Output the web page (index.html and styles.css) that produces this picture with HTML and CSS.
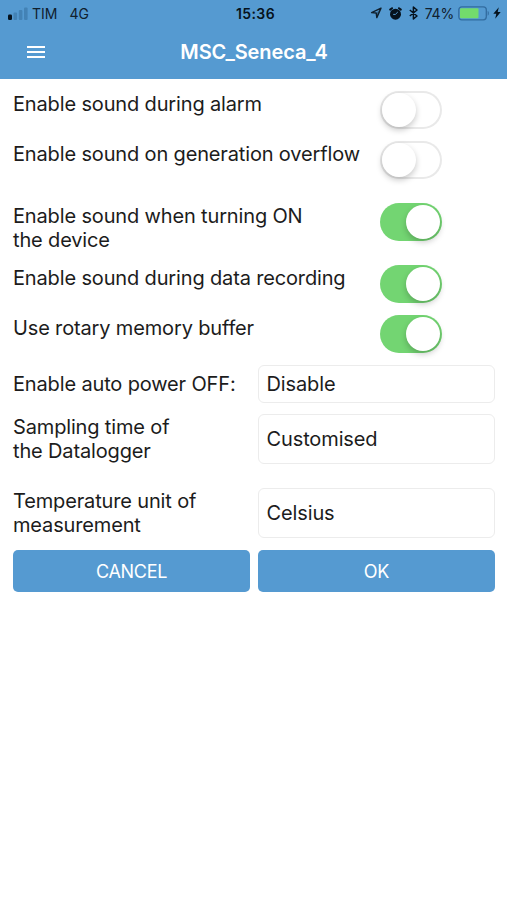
FILE: index.html
```html
<!DOCTYPE html>
<html lang="en">
<head>
<meta charset="utf-8">
<title>MSC_Seneca_4</title>
<link rel="stylesheet" href="styles.css">
</head>
<body>
<header class="top">
  <div class="status">
    <div class="status-left">
      <svg class="signal" width="20" height="13" viewBox="0 0 20 13"><rect x="0" y="7.5" width="4" height="5.5" rx="1.3" fill="#06121d"/><g fill="#4382b5"><rect x="5.5" y="5.5" width="3.6" height="7.5" rx="1"/><rect x="10.8" y="3" width="3.6" height="10" rx="1"/><rect x="16" y=".5" width="3.6" height="12.5" rx="1"/></g></svg>
      <span class="carrier">TIM</span>
      <span class="network">4G</span>
    </div>
    <span class="clock">15:36</span>
    <div class="status-right">
      <svg class="location" width="12" height="12" viewBox="0 0 12 12"><path d="M11 1.2 1.6 5.6 6.2 6 6.8 10.6Z" fill="none" stroke="#10202e" stroke-width="1.4" stroke-linejoin="round"/><path d="M11 1.2 6.2 6 6.8 10.6Z" fill="#10202e" fill-opacity=".4"/></svg>
      <svg class="alarm" width="13" height="13" viewBox="0 0 13 13"><circle cx="6.5" cy="7.2" r="5.5" fill="#06121d"/><path d="M1.2 2.6 3 1.2M11.8 2.6 10 1.2" stroke="#06121d" stroke-width="2" stroke-linecap="round"/><path d="M8.8 5 6.4 7.4H4.2" fill="none" stroke="#559ad1" stroke-width="1"/></svg>
      <svg class="bluetooth" width="9" height="14" viewBox="0 0 9 14"><path d="M.8 4 8 10 4.4 13V1L8 4 .8 10" fill="none" stroke="#06121d" stroke-width="1.5" stroke-linejoin="round"/></svg>
      <span class="percent">74%</span>
      <svg class="battery" width="32" height="15" viewBox="0 0 32 15"><rect x=".8" y=".8" width="27.5" height="13" rx="3" fill="none" stroke="#326c9f" stroke-width="1.3"/><rect x="2" y="2.3" width="18.5" height="10" rx="1" fill="#73db6c"/><path d="M29.7 5c1.5.5 1.5 4.2 0 4.7Z" fill="#326c9f"/></svg>
      <svg class="bolt" width="8" height="12" viewBox="0 0 8 12"><path d="M5.8.3.3 6.7h3L2.2 11.7 7.7 4.9h-3Z" fill="#06121d"/></svg>
    </div>
  </div>
  <div class="nav">
    <svg class="menu" width="18" height="14" viewBox="0 0 18 14"><path d="M0 2h18M0 7h18M0 12h18" stroke="#fff" stroke-width="2"/></svg>
    <h1 class="title">MSC_Seneca_4</h1>
  </div>
</header>
<main class="content">
  <section class="toggles">
    <div class="toggle-row"><span class="label">Enable sound during alarm</span><span class="switch"></span></div>
    <div class="toggle-row tall"><span class="label">Enable sound on generation overflow</span><span class="switch"></span></div>
    <div class="toggle-row tall"><span class="label">Enable sound when turning ON<br>the device</span><span class="switch on"></span></div>
    <div class="toggle-row"><span class="label">Enable sound during data recording</span><span class="switch on"></span></div>
    <div class="toggle-row"><span class="label">Use rotary memory buffer</span><span class="switch on"></span></div>
  </section>
  <section class="fields">
    <div class="field power"><span class="label">Enable auto power OFF:</span><div class="select">Disable</div></div>
    <div class="field sampling"><span class="label">Sampling time of<br>the Datalogger</span><div class="select">Customised</div></div>
    <div class="field unit"><span class="label">Temperature unit of<br>measurement</span><div class="select">Celsius</div></div>
  </section>
  <div class="actions">
    <button class="button" type="button">CANCEL</button>
    <button class="button" type="button">OK</button>
  </div>
</main>
</body>
</html>
```
FILE: styles.css
```css
* { box-sizing: border-box; }
body {
  margin: 0;
  min-height: 900px;
  background: #fff;
  color: #1c1c1c;
  font-family: Inter, "Liberation Sans", sans-serif;
  font-size: 20px;
  line-height: 24.5px;
}
svg { display: block; flex: none; }
.top { height: 79px; background: #559ad1; }
.status {
  display: grid;
  grid-template-columns: 1fr auto 1fr;
  height: 27px;
  padding: 0 6px 0 8px;
  align-items: center;
  color: #10202e;
  font-size: 14px;
  line-height: 27px;
}
.status-left, .status-right { display: flex; align-items: center; }
.status-right { justify-content: flex-end; }
.carrier { margin-left: 4px; }
.network { margin-left: 12px; }
.clock { padding-left: 2px; color: #06121d; font-weight: 600; letter-spacing: .4px; }
.signal, .location, .alarm, .bluetooth, .battery, .bolt { margin-top: -1px; }
.alarm { margin-left: 7px; }
.bluetooth { margin-left: 7px; }
.percent { margin-left: 7px; letter-spacing: -.2px; }
.battery { margin-left: 4px; }
.bolt { margin-left: 3px; }
.nav {
  display: grid;
  grid-template-columns: 45px 1fr 45px;
  height: 50px;
  padding: 0 27px;
  align-items: center;
}
.title { margin: 0; padding-left: 1px; color: #fff; font-size: 20px; font-weight: 600; letter-spacing: -.1px; text-align: center; }
.content { padding: 12.5px 12px 0 13px; }
.toggles { display: grid; row-gap: 13px; }
.toggle-row { display: grid; grid-template-columns: 367px 62px; height: 37px; align-items: start; }
.toggle-row.tall { height: 49px; }
.label { white-space: nowrap; letter-spacing: -.15px; }
.switch {
  display: flex;
  width: 62px;
  height: 38px;
  margin-top: -.5px;
  padding: 2px;
  border-radius: 19px;
  box-shadow: inset 0 0 0 2px #e9e9e9;
}
.switch::before {
  content: "";
  width: 34px;
  height: 34px;
  border-radius: 50%;
  background: #fff;
  box-shadow: 0 3px 6px rgba(0, 0, 0, .22);
}
.switch.on { justify-content: flex-end; background: #73d572; box-shadow: none; }
.fields { display: grid; padding-top: 12.5px; }
.field { display: grid; grid-template-columns: 237px 237px; column-gap: 8px; align-items: center; }
.power { height: 38px; }
.sampling { height: 50px; margin-top: 11px; }
.unit { height: 50px; margin-top: 24px; }
.select {
  display: flex;
  height: 100%;
  padding: 0 7.5px;
  align-items: center;
  border: 1.5px solid #ececec;
  border-radius: 6px;
  letter-spacing: -.12px;
}
.actions { display: grid; grid-template-columns: 237px 237px; column-gap: 8px; margin-top: 12px; }
.button {
  height: 42px;
  padding: 1px 0 0;
  border: 0;
  border-radius: 5px;
  background: #559ad1;
  color: #fff;
  font-family: inherit;
  font-size: 18px;
  font-weight: 400;
  letter-spacing: -.3px;
}
```
